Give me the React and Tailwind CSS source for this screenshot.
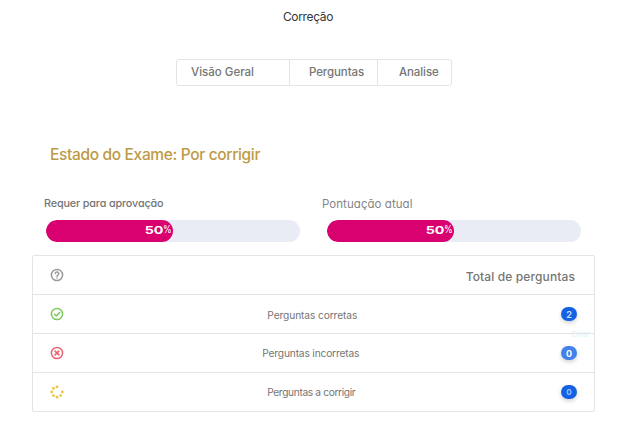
import React from 'react';

function Bar({ label, value, labelClass, className, barClass }) {
  return (
    <section className={`flex flex-col ${className}`}>
      <h3 className={`h-4 whitespace-nowrap leading-4 [font-feature-settings:'cv11','ss03'] ${labelClass}`}>{label}</h3>
      <div className={`mt-2 h-[22px] w-[254px] overflow-hidden rounded-full bg-[#e9ecf5] ${barClass}`}>
        <div
          className="flex h-full items-center justify-end rounded-full bg-[#d9006f] pr-[2px] text-white"
          style={{ width: `${value}%` }}
        >
          <span className="origin-right scale-x-[1.3] text-[11px] font-bold leading-none">{value}</span>
          <span className="w-[8px] origin-left scale-x-[0.85] text-[10.5px] leading-none">%</span>
        </div>
      </div>
    </section>
  );
}

function Row({ icon, label, value, badgeClass, valueClass, labelClass, note }) {
  return (
    <div className="relative flex h-[39px] items-center border-t border-[#e4e4e4] pl-[16.5px] pr-[17px]">
      <div className="w-[14px]">{icon}</div>
      <div className={`flex-1 whitespace-nowrap text-center text-[10.2px] leading-4 text-[#757575] ${labelClass}`}>{label}</div>
      <div className={`flex h-[14px] w-4 items-center justify-center rounded-full text-[9px] font-bold shadow-[0_2px_4px_rgba(0,0,0,0.18)] ${badgeClass}`}>
        <span className={`leading-none ${valueClass}`}>{value}</span>
      </div>
      {note && <span className="absolute -bottom-[6px] right-[4px] text-[8px] leading-[10px] text-[#dcf5f8]">{note}</span>}
    </div>
  );
}

function CircleIcon({ className, children }) {
  return (
    <svg viewBox="0 0 14 14" className={`block size-[14px] ${className}`} fill="none" stroke="currentColor" strokeLinecap="round" strokeLinejoin="round">
      <circle cx="7" cy="7" r="5.6" strokeWidth="1.5" />
      {children}
    </svg>
  );
}

const dots = [
  [7, 1.9], [3.4, 3.4], [1.7, 7], [3.4, 10.6], [7, 12.2], [10.6, 10.6], [12.3, 7],
];

export default function App() {
  return (
    <main className="flex h-[432px] w-[630px] flex-col overflow-hidden bg-white font-['Inter',sans-serif]">
      <h1 className="mt-[9px] h-4 w-[616px] text-center text-[12px] leading-4 tracking-[-0.35px] text-[#353535]">Correção</h1>

      <nav className="ml-[176px] mt-[34px] flex h-[27px] w-[276px] rounded-[3px] border border-[#e4e4e4] text-[11.5px] font-medium leading-[25px] text-[#757575]">
        <a className="w-[113px] whitespace-nowrap border-r border-[#e4e4e4] pl-[14px]">Visão Geral</a>
        <a className="w-[88px] whitespace-nowrap border-r border-[#e4e4e4] pl-[19px] tracking-[-0.1px]">Perguntas</a>
        <a className="flex-1 whitespace-nowrap pl-[21px] tracking-[-0.1px]">Analise</a>
      </nav>

      <h2 className="ml-[50px] mt-[57px] h-6 whitespace-nowrap text-[15.5px] font-medium leading-6 tracking-[-0.34px] text-[#bd9a45]">
        Estado do Exame: Por corrigir
      </h2>

      <div className="mt-[28.5px] flex">
        <Bar label="Requer para aprovação" value={50} className="ml-[44px] w-[278px]" barClass="ml-[2px]" labelClass="text-[10.8px] font-medium tracking-[-0.14px] text-[#757575]" />
        <Bar label="Pontuação atual" value={50} className="w-[270px]" barClass="ml-[5px]" labelClass="text-[11.5px] tracking-[0.05px] text-[#858585]" />
      </div>

      <div className="ml-[32px] mt-[13.5px] flex w-[563px] flex-col rounded-[2px] border border-[#e4e4e4]">
        <div className="flex h-[38px] items-center justify-between pl-[16.5px] pr-[19px]">
          <CircleIcon className="text-[#999999]">
            <path d="M5.4 5.6a1.65 1.65 0 1 1 2.5 1.45c-.6.35-.9.6-.9 1.1" strokeWidth="1.5" />
            <path d="M7 10v.1" strokeWidth="1.5" />
          </CircleIcon>
          <span className="whitespace-nowrap pt-[3px] text-[12px] font-medium leading-4 tracking-[0.12px] text-[#757575]">Total de perguntas</span>
        </div>
        <Row
          label="Perguntas corretas"
          value="2"
          note="Criar"
          labelClass="pt-[2px] tracking-[-0.1px]"
          badgeClass="bg-[#1462e3]"
          valueClass="text-[#c6deff]"
          icon={<CircleIcon className="text-[#7fc85f]"><path d="M4.5 7.2l1.8 1.8 3.4-3.6" strokeWidth="1.5" /></CircleIcon>}
        />
        <Row
          label="Perguntas incorretas"
          value="0"
          labelClass="pr-[3px] tracking-[-0.16px]"
          badgeClass="bg-[#4182ec]"
          valueClass="text-white"
          icon={<CircleIcon className="text-[#ea6274]"><path d="M5.1 5.1l3.8 3.8M8.9 5.1L5.1 8.9" strokeWidth="1.6" /></CircleIcon>}
        />
        <Row
          label="Perguntas a corrigir"
          value="0"
          labelClass="pr-[2px] tracking-[-0.35px]"
          badgeClass="bg-[#1462e3]"
          valueClass="text-[#8fc2ff] text-[8px]"
          icon={
            <svg viewBox="0 0 14 14" className="block size-[14px] fill-[#ebc63f]">
              {dots.map(([x, y]) => <circle key={`${x}-${y}`} cx={x} cy={y} r="1.4" />)}
            </svg>
          }
        />
      </div>
    </main>
  );
}
